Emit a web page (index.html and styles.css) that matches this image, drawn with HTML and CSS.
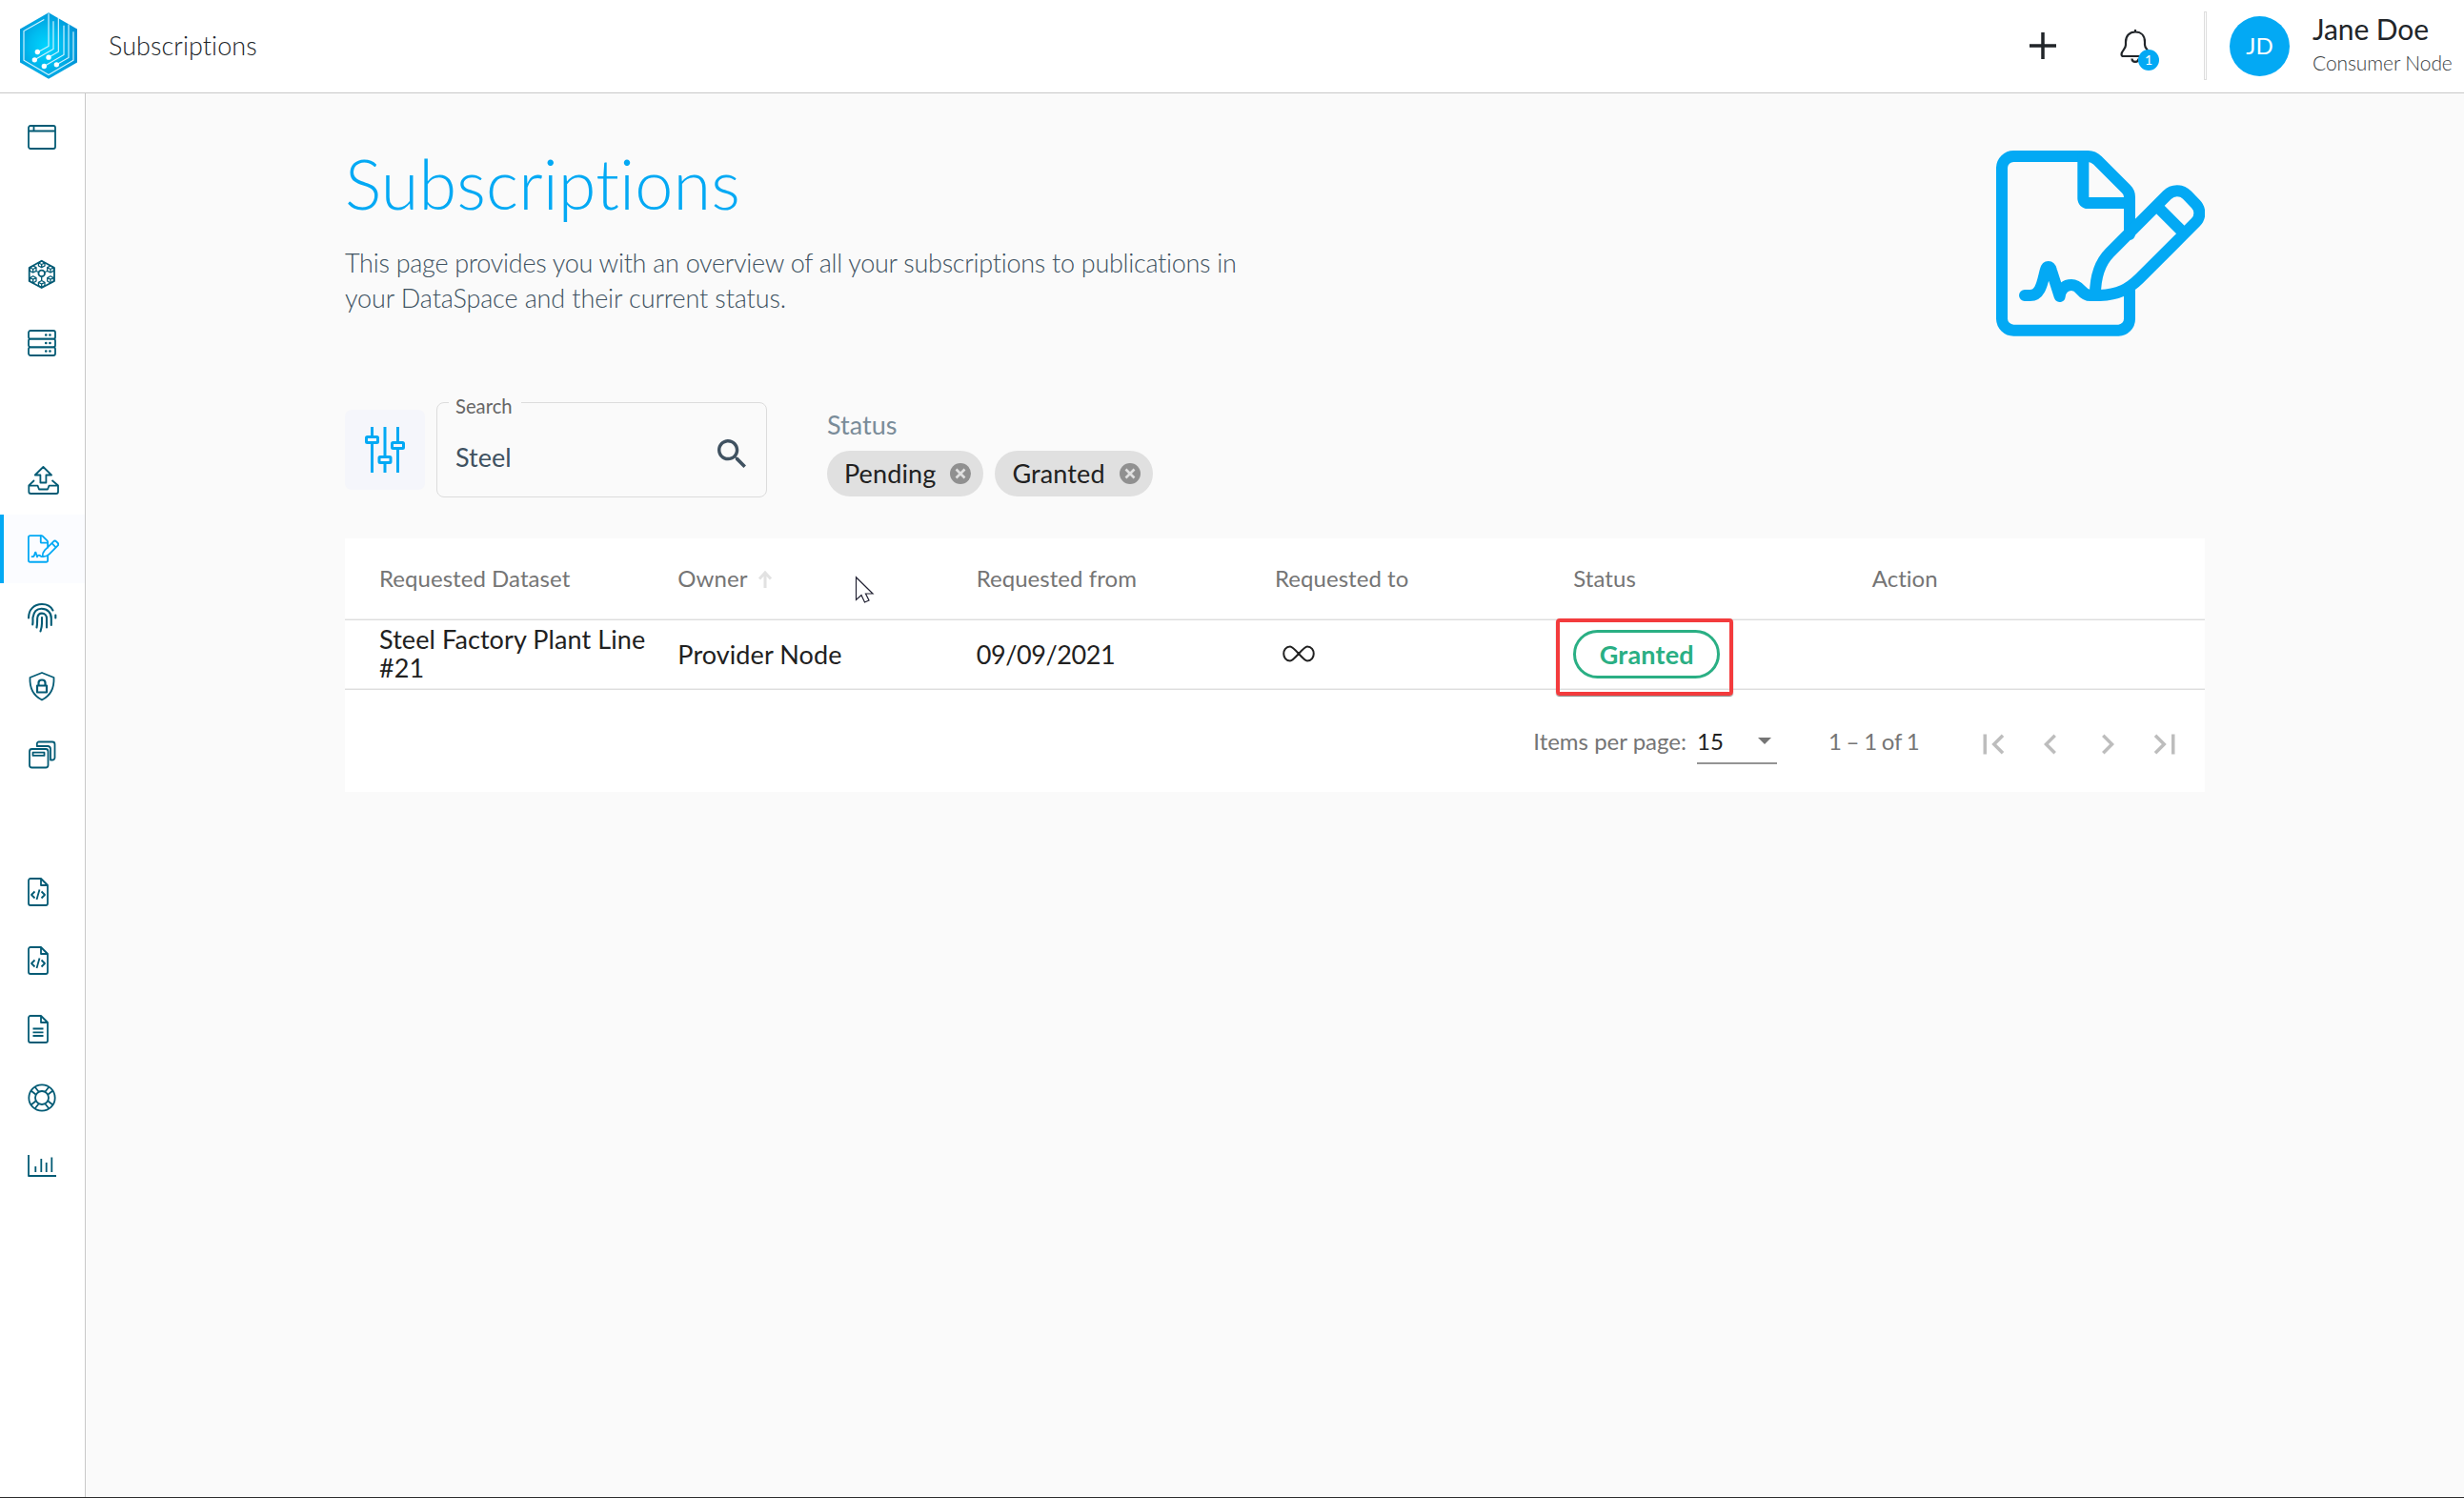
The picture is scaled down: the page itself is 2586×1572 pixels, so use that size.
FILE: index.html
```html
<!DOCTYPE html>
<html lang="en">
<head>
<meta charset="utf-8">
<title>Subscriptions</title>
<link rel="stylesheet" href="styles.css">
</head>
<body>
<svg class="defs" width="0" height="0">
  <symbol id="contract" viewBox="105 54 657 585">
    <path d="M525 318V200C525 190 521 182 514 175L424 85C415 76 406 72 395 72H160A37 37 0 0 0 123 108V584A37 37 0 0 0 160 620H490A36 36 0 0 0 525 584V495"/>
    <path d="M379 72V205A14 14 0 0 0 393 219H525"/>
    <path d="M195 510H212C246 510 251 466 260 432C264 416 275 416 279 432L305 513C308 488 323 477 342 477C374 477 370 510 402 510H432C490 508 522 490 555 458L733 280C749 264 749 238 733 222L706 194C688 176 661 176 643 194L463 375C430 408 417 450 417 508"/>
    <path d="M622 240L685 303"/>
  </symbol>
  <symbol id="codefile" viewBox="0 0 36 36">
    <path d="M17 4H6A2 2 0 0 0 4 6V30A2 2 0 0 0 6 32H22A2 2 0 0 0 24 30V11L17 4V11H24"/>
    <path d="M10.500 17.500L7 21L10.500 24.500M17.500 17.500L21 21L17.500 24.500M15.500 15.500L12.500 26"/>
  </symbol>
</svg>
<header class="topbar">
  <svg class="logo" viewBox="63 39 180 209">
    <defs><radialGradient id="lg" cx=".45" cy=".52" r=".6"><stop offset="0" stop-color="#00d5ff"/><stop offset=".45" stop-color="#00bcf0"/><stop offset="1" stop-color="#0090d4"/></radialGradient></defs>
    <path fill="url(#lg)" d="M153 39L243 91V196L153 248L63 196V91Z"/>
    <g fill="none" stroke="#d5f3ff" stroke-width="3.500">
      <path d="M139 61L75 97V189L153 235L231 189V99"/>
      <path d="M153 42V145L119 164"/><path d="M168 66V154L109 188"/><path d="M184 56V162L153 180"/><path d="M201 80V172L139 208"/><path d="M216 76V181L178 203"/>
    </g>
    <g fill="#fff"><circle cx="118" cy="163" r="8"/><circle cx="109" cy="188" r="8"/><circle cx="153" cy="180" r="8"/><circle cx="139" cy="208" r="8"/><circle cx="178" cy="203" r="8"/></g>
  </svg>
  <span class="crumb">Subscriptions</span>
  <svg class="plus" viewBox="0 0 28 28"><path d="M14 0V28M0 14H28"/></svg>
  <div class="bell">
    <svg viewBox="0 0 32 37"><path d="M16 3.500C9.500 3.500 6 8 6 14V17C6 22 1.500 23 1.500 27C1.500 28.500 2 29 3.500 29H29C30 29 31 28.500 31 27C31 23 26 22 26 17V14C26 8 22.500 3.500 16 3.500ZM16 1V3.500M12.500 31.500C12.500 36 19.500 36 19.500 31.500"/></svg>
    <span class="badge">1</span>
  </div>
  <div class="divider"></div>
  <div class="avatar">JD</div>
  <div class="user"><span class="name">Jane Doe</span><span class="org">Consumer Node</span></div>
</header>
<div class="body">
  <nav class="side">
    <a><svg viewBox="0 0 36 36"><rect x="4" y="6" width="28" height="24" rx="2"/><path d="M4 11.500H32M9.500 6V11.500"/></svg></a>
    <a class="gap"><svg viewBox="0 0 36 36"><path d="M17.700 3.700L31 11V25L17.700 32L4.700 25V11Z"/>
      <path d="M8.700 9L12 10.700V14.300L8.700 16L5.400 14.300V10.700ZM5.400 10.700L8.700 12.500L12 10.700M8.700 12.500V16M27 9L30.300 10.700V14.300L27 16L23.700 14.300V10.700ZM23.700 10.700L27 12.500L30.300 10.700M27 12.500V16M8.700 19.700L12 21.500V25L8.700 27L5.400 25V21.500ZM5.400 21.500L8.700 23.200L12 21.500M8.700 23.200V27M27 19.700L30.300 21.500V25L27 27L23.700 25V21.500ZM23.700 21.500L27 23.200L30.300 21.500M27 23.200V27M17.700 4L21 6V9L17.700 10.700L14.400 9V6ZM14.400 6L17.700 7.500L21 6M17.700 7.500V10.700M17.700 24.500L21 26.300V29.500L17.700 31.500L14.400 29.500V26.300ZM14.400 26.300L17.700 28L21 26.300M17.700 28V31.500M17.700 20.500V24.500M12 14.500L14.500 15.500M23.700 14.500L21 15.500" stroke-width="1.300"/><circle cx="17.700" cy="16.900" r="3.300"/></svg></a>
    <a><svg viewBox="0 0 36 36"><rect x="4" y="5" width="28" height="8.700" rx="2"/><rect x="4" y="13.700" width="28" height="8.600" rx="2"/><rect x="4" y="22.300" width="28" height="8.700" rx="2"/><path stroke-width="2.600" stroke-linecap="round" d="M22.200 9.500h.1M26.400 9.500h.1M22.200 18h.1M26.400 18h.1M22.200 26.500h.1M26.400 26.500h.1"/></svg></a>
    <a class="gap"><svg viewBox="0 0 36 36"><path d="M19.400 4L28 12.500H22.400V20.500H16.400V12.500H10.800ZM10 18L4.300 23.500V30A2 2 0 0 0 6.300 32H33A2 2 0 0 0 35 30V23.500L28.500 18M4.300 23.700H13.500L15 27.500H24L25.500 23.700H35"/></svg></a>
    <a class="active"><svg class="sign"><use href="#contract"/></svg></a>
    <a><svg viewBox="0 0 36 36" class="fp"><path d="M4 18.500C4 9.500 10 4 18 4C23.500 4 27.500 6.500 29.500 10.500M32.300 15.500V18.500M8.200 25.500C8.800 23 8.300 20 8.500 18C9.500 11.500 13.500 8.800 17.500 8.800C24 8.800 28 13 27.800 19V26M12.500 28.500C13.300 25 13 21.500 13.200 18.500C13.600 15 15.500 13.600 18 13.600C21 13.600 23 16 23 19V28.500M18 18V24C18 27 17.300 30 16.500 32.500"/></svg></a>
    <a><svg viewBox="0 0 36 36"><path d="M18 4L30.500 9C31 19 28 27.500 18 32.500C8 27.500 5 19 5.500 9Z"/><rect x="13" y="17.500" width="10" height="7" stroke-width="2.200"/><path stroke-width="2.200" d="M14.500 17.500V14.500C14.500 10.500 21.500 10.500 21.500 14.500V17.500"/></svg></a>
    <a><svg viewBox="0 0 36 36"><rect x="5" y="12" width="19.500" height="19.500" rx="2.500"/><rect x="8.500" y="15.700" width="12" height="3.200"/><path d="M12.800 9V6.500A2 2 0 0 1 14.800 4.500H29A2.500 2.500 0 0 1 31.500 7V21A2.500 2.500 0 0 1 29 23.500H27V12A3 3 0 0 0 24.500 9Z"/></svg></a>
    <a class="gap"><svg><use href="#codefile"/></svg></a>
    <a><svg><use href="#codefile"/></svg></a>
    <a><svg viewBox="0 0 36 36"><path d="M17 4H6A2 2 0 0 0 4 6V30A2 2 0 0 0 6 32H22A2 2 0 0 0 24 30V11L17 4V11H24M8.500 17.500H19.500M8.500 21.300H19.500M8.500 25H19.500"/></svg></a>
    <a><svg viewBox="0 0 36 36"><circle cx="18" cy="18" r="13.700"/><circle cx="18" cy="18" r="7"/><path d="M6.500 10.500L11.500 14.500M10.500 6.500L14.500 11.500M25.500 6.500L21.500 11.500M29.500 10.500L24.500 14.500M6.500 25.500L11.500 21.500M10.500 29.500L14.500 24.500M29.500 25.500L24.500 21.500M25.500 29.500L21.500 24.500"/></svg></a>
    <a><svg viewBox="0 0 36 36"><path d="M4 6V28H33M11.300 18V24M17.300 10V24M22.700 14V24M28.300 8.500V24"/></svg></a>
  </nav>
  <main>
    <section class="hero">
      <div>
        <h1>Subscriptions</h1>
        <p><span class="tight">This page provides you with an overview of all your subscriptions to publications in</span><br>your DataSpace and their current status.</p>
      </div>
      <svg class="hero-icon"><use href="#contract"/></svg>
    </section>
    <section class="filters">
      <button class="tune"><svg viewBox="0 0 42 48"><path d="M7.500 0V9M7.500 18V48M21 0V30M21 39V48M34.500 0V15M34.500 24V48"/><rect x="1.500" y="10.500" width="12" height="6" rx="1"/><rect x="15" y="31.500" width="12" height="6" rx="1"/><rect x="28.500" y="16.500" width="12" height="6" rx="1"/></svg></button>
      <div class="search">
        <label>Search</label><span>Steel</span>
        <svg viewBox="3 3 17.500 17.500"><path d="M15.500 14h-.790l-.280-.270C15.410 12.590 16 11.110 16 9.500 16 5.910 13.090 3 9.500 3S3 5.910 3 9.500 5.910 16 9.500 16c1.610 0 3.090-.590 4.230-1.570l.270.280v.790l5 4.990L20.490 19l-4.990-5zm-6 0C7.010 14 5 11.990 5 9.500S7.010 5 9.500 5 14 7.010 14 9.500 11.990 14 9.500 14z"/></svg>
      </div>
      <div class="status">
        <span class="cap">Status</span>
        <div class="chips">
          <span class="chip">Pending<svg viewBox="0 0 22 22"><circle cx="11" cy="11" r="11"/><path d="M6.500 6.500L15.500 15.500M15.500 6.500L6.500 15.500"/></svg></span>
          <span class="chip">Granted<svg viewBox="0 0 22 22"><circle cx="11" cy="11" r="11"/><path d="M6.500 6.500L15.500 15.500M15.500 6.500L6.500 15.500"/></svg></span>
        </div>
      </div>
    </section>
    <section class="table">
      <div class="row head">
        <span>Requested Dataset</span>
        <span>Owner<svg class="sort" viewBox="0 0 14 18"><path d="M7 18V2M1 8.500L7 2L13 8.500"/></svg></span>
        <span>Requested from</span><span>Requested to</span><span>Status</span><span>Action</span>
      </div>
      <div class="row">
        <span class="long">Steel Factory Plant Line #21</span>
        <span>Provider Node</span>
        <span class="date">09/09/2021</span>
        <span><svg class="inf" viewBox="0 0 34 18"><path d="M17 9C12.500 4 10 1.500 8 1.500C-1 1.500 -1 16.500 8 16.500C10 16.500 12.500 14 17 9C21.500 4 24 1.500 26 1.500C35 1.500 35 16.500 26 16.500C24 16.500 21.500 14 17 9Z"/></svg></span>
        <span class="cell-status"><b class="pill">Granted</b><i class="mark"></i></span>
        <span></span>
      </div>
      <div class="pager">
        <span class="per">Items per page:</span>
        <span class="select">15<i></i></span>
        <span class="range">1 – 1 of 1</span>
        <div class="nav">
          <svg viewBox="0 0 24 24"><path d="M18.410 16.590L13.820 12l4.590-4.590L17 6l-6 6 6 6zM6 6h2v12H6z"/></svg>
          <svg viewBox="0 0 24 24"><path d="M15.410 7.410L14 6l-6 6 6 6 1.410-1.410L10.830 12z"/></svg>
          <svg viewBox="0 0 24 24"><path d="M10 6L8.590 7.410 13.170 12l-4.580 4.590L10 18l6-6z"/></svg>
          <svg viewBox="0 0 24 24"><path d="M5.590 7.410L10.180 12l-4.590 4.590L7 18l6-6-6-6zM16 6h2v12h-2z"/></svg>
        </div>
      </div>
    </section>
  </main>
</div>
<svg class="cursor" viewBox="0 0 19 28"><path d="M.5 .8V24.500L6 19.500L9.500 27L14 25L10.500 18H18Z"/></svg>
</body>
</html>
```
FILE: styles.css
```css
* { box-sizing: border-box; }
body {
  margin: 0; height: 1572px; display: flex; flex-direction: column; overflow: hidden;
  font-family: Lato, sans-serif; font-size: 27px; color: #212121;
  background: #fafafa; border-bottom: 1px solid #2b2b2b;
  font-variant-ligatures: none;
}
svg { flex: none; display: block; overflow: visible; }
.defs { position: absolute; }

.topbar {
  height: 98px; flex: none; display: flex; align-items: center;
  background: #fff; border-bottom: 1px solid #c8c8c8; color: #212529;
}
.logo { width: 60px; height: 70px; margin: 0 0 2px 21px; }
.crumb { margin: 0 auto 2px 33px; font-weight: 300; letter-spacing: .06px; }
.plus { width: 28px; height: 28px; fill: none; stroke: #212529; stroke-width: 3.5; margin: 0 67px 1px 0; }
.bell { position: relative; width: 32px; height: 37px; margin: 0 56px 1px 0; }
.bell svg { width: 32px; height: 37px; fill: none; stroke: #212529; stroke-width: 2.2; }
.badge {
  position: absolute; left: 19px; top: 22px; width: 22px; height: 22px; border-radius: 50%;
  background: #03a9f4; color: #fff; font-size: 14px; line-height: 22px; text-align: center;
}
.divider { width: 3px; height: 72px; border: 1px solid #ddd; margin: 0 24px 1px 0; }
.avatar {
  width: 63px; height: 63px; border-radius: 50%; background: #03a9f4; color: #fff;
  font-size: 24px; line-height: 62px; text-align: center; margin-right: 24px;
}
.user { width: 159px; display: flex; flex-direction: column; white-space: nowrap; height: 83px; }
.name { font-size: 30px; line-height: 46px; letter-spacing: -.1px; }
.org { font-size: 21px; line-height: 26px; font-weight: 300; letter-spacing: -.1px; color: #3a3e42; }

.body { flex: 1; display: flex; }
.side {
  width: 90px; padding-top: 10px; display: flex; flex-direction: column;
  background: #fff; border-right: 1px solid #c8c8c8;
}
.side a { height: 72px; padding-left: 26px; display: flex; align-items: center; }
.side .gap { margin-top: 72px; }
.side svg { width: 36px; height: 36px; fill: none; stroke: #035b75; stroke-width: 1.8; stroke-linejoin: round; }
.side .fp { stroke-width: 2.1; stroke-linecap: round; }
.side .active { background: #fbfcff; border-left: 4px solid #03a9f4; padding-left: 25px; }
.side .sign { width: 33px; height: 30px; stroke: #03a9f4; stroke-width: 36; stroke-linecap: round; }

main { width: 1952px; margin: 0 auto; padding-top: 52px; }
.hero { height: 272px; display: flex; justify-content: space-between; }
h1 { margin: 0 0 23px; font-size: 72px; line-height: 84px; font-weight: 300; color: #03a9f4; letter-spacing: .13px; }
.hero p { margin: 0; font-size: 27px; line-height: 37px; font-weight: 300; color: #405261; white-space: nowrap; letter-spacing: -.12px; }
.hero .tight { letter-spacing: -.28px; }
.hero-icon { width: 219px; height: 195px; margin-top: 8px; fill: none; stroke: #03a9f4; stroke-width: 36; stroke-linejoin: round; stroke-linecap: round; }

.filters { height: 143px; display: flex; align-items: flex-start; }
.tune { width: 84px; height: 84px; margin: 8px 12px 0 0; padding: 0 21px; border: 0; border-radius: 7px; background: #f5f6fb; }
.tune svg { width: 42px; height: 48px; fill: none; stroke: #03a9f4; stroke-width: 3; }
.search {
  position: relative; width: 347px; height: 100px; border: 1px solid #dcdcdc; border-radius: 8px;
  padding: 14px 21px 0 19px; display: flex; justify-content: space-between; align-items: center; color: #405261;
}
.search label {
  position: absolute; left: 12px; top: -9px; padding: 0 7px; background: #fafafa;
  font-size: 20.25px; line-height: 24px; color: #666; width: 76px;
}
.search svg { width: 30px; height: 30px; fill: #405261; margin-bottom: 7px; }
.status { margin: 8px 0 0 63px; display: flex; flex-direction: column; gap: 11px; }
.cap { line-height: 31px; padding-bottom: 1px; color: #7a8c99; }
.chips { display: flex; gap: 12px; }
.chip {
  height: 48px; padding: 0 13px 1px 18px; border-radius: 24px; background: #e0e0e0;
  display: flex; align-items: center; gap: 15px; letter-spacing: .12px;
}
.chip svg { width: 22px; height: 22px; fill: #909090; stroke: none; }
.chip path { stroke: #e0e0e0; stroke-width: 2.6; }

.table { height: 266px; background: #fff; }
.row {
  height: 73px; padding: 0 36px 2px; display: grid; grid-template-columns: repeat(6, 1fr); align-items: center;
  border-bottom: 1px solid #ddd; box-shadow: inset 0 -1px #f0f0f0; letter-spacing: .09px;
}
.row > span { display: flex; align-items: center; white-space: nowrap; }
.head { height: 86px; font-size: 24px; color: #757575; letter-spacing: .05px; }
.row .long { white-space: normal; line-height: 30px; padding-right: 28px; }
.row .date { letter-spacing: -.4px; }
.sort { width: 14px; height: 18px; margin: 3px 0 0 12px; fill: none; stroke: #e2e2e2; stroke-width: 3; }
.inf { width: 34px; height: 18px; margin-left: 8px; fill: none; stroke: #212121; stroke-width: 2; }
.row .cell-status { position: relative; }
.pill {
  width: 154px; height: 51px; border: 3px solid #2aaf84; border-radius: 26px; color: #2aaf84;
  line-height: 46px; text-align: center; letter-spacing: .2px;
}
.mark {
  position: absolute; left: -18px; top: -12px; width: 186px; height: 81px;
  border: 4px solid #f33b3d; border-radius: 4px; box-shadow: 0 1px 1px #888;
}
.pager { height: 107px; padding: 0 12px 1px 0; display: flex; align-items: center; justify-content: flex-end; font-size: 24px; color: #757575; }
.per { margin-right: 11px; }
.select {
  width: 84px; height: 49px; border-bottom: 2px solid #949494; padding: 2px 6px 0 0; color: #212121;
  display: flex; align-items: center; justify-content: space-between;
}
.select i { border: 7.5px solid transparent; border-top-color: #757575; border-bottom: 0; }
.range { width: 143px; margin-left: 54px; white-space: nowrap; word-spacing: -1.5px; }
.nav { display: flex; padding-top: 7px; }
.nav svg { width: 42px; height: 42px; margin: 0 9px; fill: #bdbdbd; }

.cursor { position: absolute; left: 898px; top: 605px; width: 19px; height: 28px; fill: #fff; stroke: #223; stroke-width: 1.2; }
```
